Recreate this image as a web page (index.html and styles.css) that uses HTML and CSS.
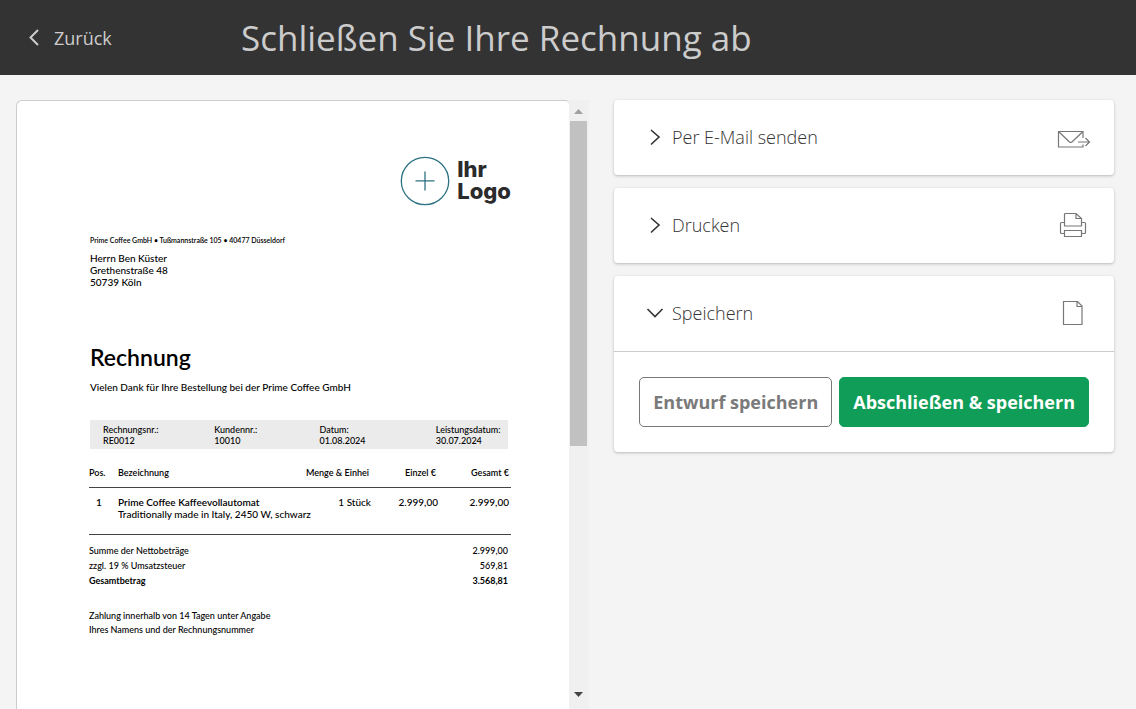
FILE: index.html
```html
<!DOCTYPE html>
<html lang="de">
<head>
<meta charset="utf-8">
<meta name="viewport" content="width=device-width, initial-scale=1">
<title>Schließen Sie Ihre Rechnung ab</title>
<link rel="stylesheet" href="styles.css">
</head>
<body>
<header class="topbar">
  <a class="back" href="#">
    <svg width="12" height="18" viewBox="0 0 12 18" fill="none" stroke="currentColor" stroke-width="2" aria-hidden="true"><path d="M10 1 2.500 8.500 10 16"/></svg>
    <span>Zurück</span>
  </a>
  <h1 class="title">Schließen Sie Ihre Rechnung ab</h1>
</header>
<main class="content">
  <section class="preview" aria-label="Rechnungsvorschau">
    <article class="paper">
      <div class="logo">
        <svg width="50" height="50" viewBox="0 0 50 50" fill="none" stroke="#2c7283" stroke-width="1.300" aria-hidden="true"><circle cx="25" cy="25" r="23.700"/><path d="M25 15.500v19M15.500 24.800h19"/></svg>
        <div class="logo-text">Ihr<br>Logo</div>
      </div>
      <p class="sender">Prime Coffee GmbH • Tußmannstraße 105 • 40477 Düsseldorf</p>
      <address class="recipient">Herrn Ben Küster<br>Grethenstraße 48<br>50739 Köln</address>
      <h2 class="doc-title">Rechnung</h2>
      <p class="intro">Vielen Dank für Ihre Bestellung bei der Prime Coffee GmbH</p>
      <dl class="meta">
        <div><dt>Rechnungsnr.:</dt><dd>RE0012</dd></div>
        <div><dt>Kundennr.:</dt><dd>10010</dd></div>
        <div><dt>Datum:</dt><dd>01.08.2024</dd></div>
        <div><dt>Leistungsdatum:</dt><dd>30.07.2024</dd></div>
      </dl>
      <table class="items">
        <colgroup><col class="c-pos"><col><col class="c-qty"><col class="c-price"><col class="c-total"></colgroup>
        <thead><tr><th>Pos.</th><th>Bezeichnung</th><th class="num">Menge &amp; Einhei</th><th class="num">Einzel €</th><th class="num">Gesamt €</th></tr></thead>
        <tbody><tr><td class="pos">1</td><td class="desc"><strong>Prime Coffee Kaffeevollautomat</strong><br>Traditionally made in Italy, 2450 W, schwarz</td><td class="num">1 Stück</td><td class="num">2.999,00</td><td class="num">2.999,00</td></tr></tbody>
      </table>
      <table class="totals">
        <tbody>
          <tr><th>Summe der Nettobeträge</th><td>2.999,00</td></tr>
          <tr><th>zzgl. 19 % Umsatzsteuer</th><td>569,81</td></tr>
          <tr class="grand"><th>Gesamtbetrag</th><td>3.568,81</td></tr>
        </tbody>
      </table>
      <p class="terms">Zahlung innerhalb von 14 Tagen unter Angabe<br>Ihres Namens und der Rechnungsnummer</p>
    </article>
    <div class="scrollbar" aria-hidden="true">
      <svg width="18" height="20" viewBox="0 0 18 20"><path d="M4 13h9L8.500 8z" fill="#a0a0a0"/></svg>
      <div class="rail"><div class="thumb"></div></div>
      <svg width="18" height="24" viewBox="0 0 18 24"><path d="M4 10h9l-4.500 5z" fill="#444"/></svg>
    </div>
  </section>
  <div class="actions">
    <section class="card">
      <button class="card-head" type="button" aria-expanded="false">
        <svg class="chevron" width="18" height="18" viewBox="0 0 18 18" aria-hidden="true"><path d="M5 1l8 7-8 7.500"/></svg>
        <span class="label">Per E-Mail senden</span>
        <svg class="icon" width="34" height="30" viewBox="0 0 34 30" aria-hidden="true"><path d="M26 15V8.500H1.500V24H26v-2.500M1.500 8.500l11 10.500q1.200 1 2.400 0L26 8.500M21 19h11.500M28.500 15l4 4-4 4"/></svg>
      </button>
    </section>
    <section class="card">
      <button class="card-head" type="button" aria-expanded="false">
        <svg class="chevron" width="18" height="18" viewBox="0 0 18 18" aria-hidden="true"><path d="M5 1l8 7-8 7.500"/></svg>
        <span class="label">Drucken</span>
        <svg class="icon" width="34" height="30" viewBox="0 0 34 30" aria-hidden="true"><path d="M7.500 15V3.500q0-1 1-1H19l5.500 5V15zM19 2.500v5h5.500M7.500 11.500h-3q-1 0-1 1v9q0 1 1 1h3M24.500 11.500h3q1 0 1 1v9q0 1-1 1h-3M7.500 19.500h17v6h-17z"/></svg>
      </button>
    </section>
    <section class="card">
      <button class="card-head" type="button" aria-expanded="true" aria-controls="save-panel">
        <svg class="chevron" width="18" height="18" viewBox="0 0 18 18" aria-hidden="true"><path d="M1.500 4l7.500 7.500L16.500 4"/></svg>
        <span class="label">Speichern</span>
        <svg class="icon" width="34" height="30" viewBox="0 0 34 30" aria-hidden="true"><path d="M6.500 2.500h14l4.500 4.500v18.500H6.500zM20 2.500V7.500h5"/></svg>
      </button>
      <div class="panel" id="save-panel">
        <button class="btn btn-outline" type="button">Entwurf speichern</button>
        <button class="btn btn-primary" type="button">Abschließen &amp; speichern</button>
      </div>
    </section>
  </div>
</main>
</body>
</html>
```
FILE: styles.css
```css
* { box-sizing: border-box; }
body {
  margin: 0;
  height: 100vh;
  display: flex;
  flex-direction: column;
  overflow: hidden;
  background: #f4f4f4;
  color: #333;
  font-family: "Open Sans", "Noto Sans", sans-serif;
}
h1, h2, p, dl, dd { margin: 0; }

.topbar {
  flex: none;
  display: flex;
  align-items: center;
  min-height: 75px;
  padding: 0 28px;
  background: #333;
  color: #ccc;
}
.back {
  display: flex;
  align-items: center;
  gap: 14px;
  width: 213px;
  color: inherit;
  font-size: 18px;
  line-height: 24px;
  text-decoration: none;
}
.title { font-size: 35px; font-weight: 400; line-height: 48px; }

.content {
  flex: 1;
  min-height: 0;
  display: grid;
  grid-template-columns: minmax(0, 573fr) minmax(0, 500fr);
  gap: 25px;
  padding: 25px 22px 0 16px;
}

.preview { display: flex; min-height: 0; }
.paper {
  flex: 1;
  overflow: hidden;
  padding: 55px 58px 0 72px;
  border: 1px solid #ccc;
  border-width: 1px 0 0 1px;
  border-radius: 6px 4px 0 0;
  background: #fff;
  color: #000;
  font: 500 10px/12px Lato, sans-serif;
}
.logo { display: flex; justify-content: flex-end; gap: 7px; }
.logo-text { padding-top: 2px; color: #2b2b2b; font: 800 22px/22px Inter, sans-serif; }
.sender { padding: 28px 1px 0; font-size: 7px; font-weight: 600; }
.recipient { padding: 6px 1px 0; font-style: normal; }
.doc-title { padding: 55px 1px 0; font-size: 23px; font-weight: 600; line-height: 28px; }
.intro { padding: 10px 1px 0; }
.meta {
  display: grid;
  grid-template-columns: 111fr 105fr 116fr 72fr;
  margin: 27px 3px 0 1px;
  padding: 4px 0 3px 13px;
  background: #ebebeb;
  font-size: 9px;
  line-height: 11px;
}
.meta div { white-space: nowrap; }
table { width: 100%; border-collapse: collapse; }
th, td { padding: 0; font-weight: inherit; text-align: left; vertical-align: top; white-space: nowrap; }
.items { table-layout: fixed; margin-top: 18px; border-bottom: 1px solid #444; }
.items thead { border-bottom: 1px solid #444; }
.items th { padding-bottom: 8px; font-size: 9px; font-weight: 600; }
.items td { padding: 8px 0 14px; }
.items .pos { padding-left: 7px; }
.items .num { text-align: right; }
.items th.num { padding-right: 2px; }
.items .num:last-child { padding-right: 2px; }
.items strong, .items .pos { font-weight: 600; }
.c-pos { width: 29px; }
.c-qty { width: 80px; }
.c-price { width: 67px; }
.c-total { width: 73px; }
.totals { margin-top: 8px; font-size: 9px; line-height: 15px; }
.totals td { padding-right: 3px; text-align: right; }
.grand { font-weight: 700; }
.terms { padding-top: 21px; font-size: 9px; line-height: 14px; }

.scrollbar {
  flex: none;
  display: flex;
  flex-direction: column;
  width: 20px;
  padding: 1px 1px 3px;
  background: #f0f0f0;
}
.scrollbar svg { flex: none; }
.rail { flex: 1; }
.thumb { width: 17px; height: 58%; background: #c1c1c1; }

.actions { display: flex; flex-direction: column; gap: 13px; }
.card { border-radius: 4px; background: #fff; box-shadow: 0 1px 3px rgba(0, 0, 0, .25); }
.card-head {
  display: flex;
  align-items: center;
  width: 100%;
  min-height: 75px;
  padding: 0 23px 0 32px;
  border: 0;
  background: none;
  color: #333;
  font: 300 18px/24px "Open Sans", sans-serif;
  text-align: left;
}
.chevron { margin-right: 8px; fill: none; stroke: #333; stroke-width: 1.600; }
.label { flex: 1; padding-bottom: 2px; }
.icon { fill: none; stroke: #777; stroke-width: 1.200; }
.panel {
  display: flex;
  justify-content: flex-end;
  gap: 7px;
  padding: 25px;
  border-top: 1px solid #ccc;
}
.btn {
  min-height: 50px;
  padding: 0 13px;
  border: 1px solid #777;
  border-radius: 5px;
  background: #fff;
  color: #7a7a7a;
  font: 700 18px/24px "Open Sans", sans-serif;
  white-space: nowrap;
}
.btn-primary { border-color: #0f9d58; background: #0f9d58; color: #fff; }
```
